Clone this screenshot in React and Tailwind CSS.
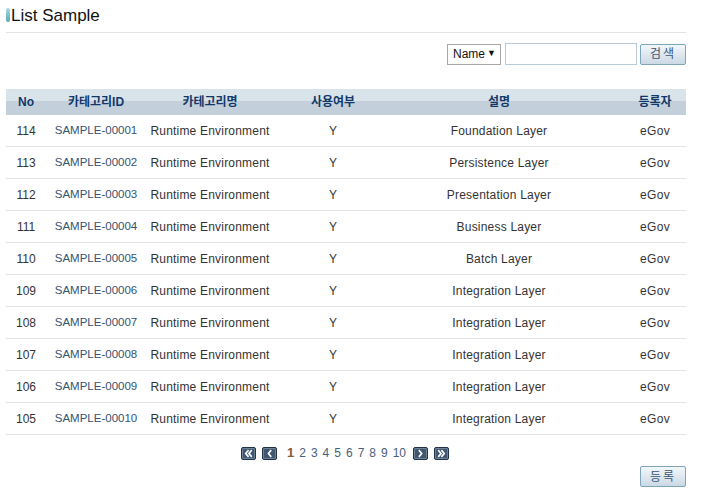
import React from 'react';

const rows = [
  { no: 114, id: 'SAMPLE-00001', desc: 'Foundation Layer' },
  { no: 113, id: 'SAMPLE-00002', desc: 'Persistence Layer' },
  { no: 112, id: 'SAMPLE-00003', desc: 'Presentation Layer' },
  { no: 111, id: 'SAMPLE-00004', desc: 'Business Layer' },
  { no: 110, id: 'SAMPLE-00005', desc: 'Batch Layer' },
  { no: 109, id: 'SAMPLE-00006', desc: 'Integration Layer' },
  { no: 108, id: 'SAMPLE-00007', desc: 'Integration Layer' },
  { no: 107, id: 'SAMPLE-00008', desc: 'Integration Layer' },
  { no: 106, id: 'SAMPLE-00009', desc: 'Integration Layer' },
  { no: 105, id: 'SAMPLE-00010', desc: 'Integration Layer' },
];

const cols = 'grid grid-cols-[40px_100px_128px_118px_214px_80px]';

// arrow boxes of the pager; dir: -1 left, 1 right; double: two chevrons
const PageBtn = ({ dir, double }) => {
  const chev = (x) =>
    dir < 0 ? `M${x + 2.5} 3 L${x} 6 L${x + 2.5} 9` : `M${x} 3 L${x + 2.5} 6 L${x} 9`;
  return (
    <span className="flex h-[13px] w-[15px] items-center justify-center rounded-[2px] border border-[#1f3246] bg-[#40576f] shadow-[inset_0_0_0_1px_#6f8499]">
      <svg width="11" height="11" viewBox="0 0 12 12" fill="none" stroke="white" strokeWidth="1.8" strokeLinecap="square">
        {double ? (
          <>
            <path d={chev(3)} />
            <path d={chev(6.5)} />
          </>
        ) : (
          <path d={chev(4.8)} />
        )}
      </svg>
    </span>
  );
};

export default function App() {
  return (
    <div className="h-[500px] w-[714px] bg-white px-[6px] font-['Liberation_Sans','Noto_Sans_CJK_KR',sans-serif] text-[12px] text-[#333]">
      <div className="w-[680px]">
        {/* title */}
        <div className="flex h-[33px] items-center border-b border-[#e3e3e3] pb-[2px]">
          <span className="mr-[1px] h-[14px] w-[4px] rounded-[2px] bg-gradient-to-b from-[#a8dbe3] to-[#5ba6b6]" />
          <h1 className="text-[17px] leading-none text-[#111]">List Sample</h1>
        </div>

        {/* search */}
        <div className="mt-[10px] flex h-[22px] items-center justify-end gap-[4px]">
          <div className="flex h-[21px] w-[54px] items-center justify-between border border-[#a7a7a7] bg-white pl-[5px] pr-[4px] text-[12px] text-[#111]">
            <span>Name</span>
            <span className="text-[9px]">▼</span>
          </div>
          <div className="h-[22px] w-[132px] border border-[#b9cad8] bg-white" />
          <button className="ml-[-1px] flex h-[21px] w-[46px] items-center justify-center rounded-[2px] border border-[#7ea5b8] bg-gradient-to-b from-[#f3f7fa] to-[#cbd9e5] text-[12px] tracking-[2px] text-[#3b5672]">
            검색
          </button>
        </div>

        {/* table */}
        <div className="mt-[24px]">
          <div className={`${cols} h-[26px] bg-[linear-gradient(#d9e3ea_0,#d9e3ea_45%,#c3d0db_45%,#c3d0db_100%)] text-[12px] font-bold text-[#123869]`}>
            <div className="flex items-center justify-center">No</div>
            <div className="flex items-center justify-center">카테고리ID</div>
            <div className="flex items-center justify-center">카테고리명</div>
            <div className="flex items-center justify-center">사용여부</div>
            <div className="flex items-center justify-center">설명</div>
            <div className="flex items-center justify-center pl-[18px]">등록자</div>
          </div>
          {rows.map((r) => (
            <div key={r.no} className={`${cols} h-[32px] border-b border-[#e3e3e3] text-[#333]`}>
              <div className="flex items-center justify-center">{r.no}</div>
              <div className="flex items-center justify-center text-[11.5px] text-[#34536f]">{r.id}</div>
              <div className="flex items-center justify-center tracking-[0.2px]">Runtime Environment</div>
              <div className="flex items-center justify-center">Y</div>
              <div className="flex items-center justify-center tracking-[0.2px]">{r.desc}</div>
              <div className="flex items-center justify-center pl-[18px] tracking-[0.3px]">eGov</div>
            </div>
          ))}
        </div>

        {/* pagination */}
        <div className="mt-[11px] flex h-[14px] items-center justify-center gap-[6px] pr-[2px]">
          <PageBtn dir={-1} double />
          <PageBtn dir={-1} />
          <div className="ml-[4px] mr-[1px] flex items-center gap-[5px] text-[12px] text-[#48607a]">
            <span className="text-[13px] font-bold text-[#8a5a3a]">1</span>
            {[2, 3, 4, 5, 6, 7, 8, 9, 10].map((n) => (
              <span key={n}>{n}</span>
            ))}
          </div>
          <PageBtn dir={1} />
          <PageBtn dir={1} double />
        </div>

        {/* register */}
        <div className="mt-[6px] flex justify-end">
          <button className="flex h-[21px] w-[46px] items-center justify-center rounded-[2px] border border-[#7ea5b8] bg-gradient-to-b from-[#f3f7fa] to-[#cbd9e5] text-[12px] tracking-[2px] text-[#3b5672]">
            등록
          </button>
        </div>
      </div>
    </div>
  );
}
